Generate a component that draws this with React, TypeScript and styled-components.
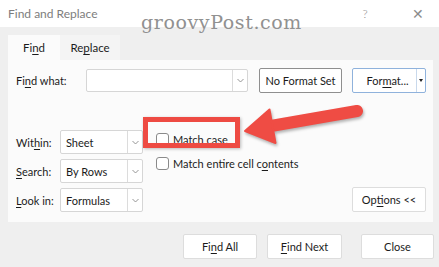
import React from "react";
import styled, { createGlobalStyle } from "styled-components";

const Global = createGlobalStyle`
  html, body {
    margin: 0;
    padding: 0;
    background: #f0f0f0;
  }
  body {
    font-family: "Lato", "Noto Sans", sans-serif;
    font-size: 11px;
    color: #1b1b1b;
    white-space: nowrap;
  }
`;

const Dialog = styled.div`
  position: relative;
  width: 439px;
  height: 267px;
  overflow: hidden;
  background: #efefef;
  display: flex;
  flex-direction: column;
`;

const TitleBar = styled.div`
  height: 27px;
  background: #ffffff;
  display: flex;
  align-items: center;
  padding-left: 8px;
  color: #7d7d7d;
  font-size: 12px;
`;

const Title = styled.span`
  flex: 1;
`;

const TitleControl = styled.span<{ $w: number }>`
  width: ${(p) => p.$w}px;
  text-align: center;
  color: #8c8c8c;
  font-size: ${(p) => (p.$w > 40 ? 14 : 12)}px;
  font-weight: 300;
`;

const Watermark = styled.div`
  position: absolute;
  left: 141px;
  top: 11px;
  font-family: "DejaVu Serif", "Liberation Serif", serif;
  font-size: 19px;
  color: #919191;
  letter-spacing: 0.6px;
`;

const Body = styled.div`
  flex: 1;
  display: flex;
  flex-direction: column;
  padding: 8px 6px 0 8px;
`;

const Tabs = styled.div`
  display: flex;
  height: 25px;
`;

const Tab = styled.div<{ $active?: boolean; $w: number }>`
  width: ${(p) => p.$w}px;
  display: flex;
  align-items: center;
  justify-content: center;
  background: ${(p) => (p.$active ? "#fbfbfb" : "#f4f4f4")};
  font-size: 11.5px;
`;

const Panel = styled.div`
  height: 162px;
  background: #fbfbfb;
  padding: 8px 7px 0 8px;
  box-sizing: border-box;
  display: flex;
  flex-direction: column;
`;

const FindRow = styled.div`
  display: flex;
  align-items: center;
  height: 25px;
`;

const Label = styled.span<{ $w: number }>`
  width: ${(p) => p.$w}px;
  flex: none;
`;

const Combo = styled.div<{ $w: number; $h: number }>`
  width: ${(p) => p.$w}px;
  height: ${(p) => p.$h}px;
  box-sizing: border-box;
  display: flex;
  background: #ffffff;
  border: 1px solid #d6d6d6;
  border-radius: 2px;
`;

const ComboText = styled.span`
  flex: 1;
  display: flex;
  align-items: center;
  padding-left: 5px;
`;

const ComboArrow = styled.span`
  width: 14px;
  border-left: 1px solid #dcdcdc;
  display: flex;
  align-items: center;
  justify-content: center;
`;

const Button = styled.div<{ $w: number; $tone?: "dark" | "blue" | "light" }>`
  width: ${(p) => p.$w}px;
  height: 25px;
  box-sizing: border-box;
  display: flex;
  align-items: center;
  justify-content: center;
  background: #ffffff;
  border-radius: 2px;
  border: 1px solid
    ${(p) =>
      p.$tone === "dark" ? "#8f8f8f" : p.$tone === "blue" ? "#8fb2dc" : "#dddddd"};
  flex: none;
`;

const SplitMain = styled.span`
  flex: 1;
  display: flex;
  align-items: center;
  justify-content: center;
  padding-left: 6px;
`;

const SplitArrow = styled.span`
  width: 8px;
  align-self: stretch;
  border-left: 1px solid #c9d9ec;
  display: flex;
  align-items: center;
  justify-content: center;
`;

const Lower = styled.div`
  display: flex;
  margin-top: 34px;
`;

const SelectCol = styled.div`
  display: flex;
  flex-direction: column;
  gap: 5px;
  padding-top: 3px;
`;

const SelectRow = styled.div`
  display: flex;
  align-items: center;
`;

const CheckCol = styled.div`
  display: flex;
  flex-direction: column;
  margin-left: 13px;
`;

const CheckRow = styled.div`
  display: flex;
  align-items: center;
  height: 24px;
  gap: 4px;
`;

const Box = styled.span`
  width: 13px;
  height: 13px;
  box-sizing: border-box;
  border: 1px solid #8a8a8a;
  border-radius: 3px;
  background: #ffffff;
`;

const OptionsSlot = styled.div`
  margin-left: auto;
  align-self: flex-end;
`;

const Footer = styled.div`
  display: flex;
  justify-content: flex-end;
  margin-top: 12px;
  margin-right: -1px;
`;

const Gap = styled.span<{ $w: number }>`
  width: ${(p) => p.$w}px;
`;

const U = styled.u`
  text-underline-offset: 2px;
`;

const Highlight = styled.div`
  position: absolute;
  left: 143px;
  top: 117px;
  width: 97px;
  height: 31px;
  box-sizing: border-box;
  border: 5px solid #ee4b43;
  box-shadow: 1px 1px 3px rgba(0, 0, 0, 0.25);
`;

const ArrowSvg = styled.svg`
  position: absolute;
  left: 0;
  top: 0;
  filter: drop-shadow(1px 2px 1.5px rgba(0, 0, 0, 0.3));
`;

const Chevron = () => (
  <svg width="7" height="5" viewBox="0 0 7 5">
    <polyline points="0.5,1 3.5,4 6.5,1" fill="none" stroke="#8a8a8a" strokeWidth="0.9" />
  </svg>
);

const Select = ({ value, w = 83 }: { value: string; w?: number }) => (
  <Combo $w={w} $h={24}>
    <ComboText>{value}</ComboText>
    <ComboArrow>
      <Chevron />
    </ComboArrow>
  </Combo>
);

export default function App() {
  return (
    <>
      <Global />
      <Dialog>
        <TitleBar>
          <Title>Find and Replace</Title>
          <TitleControl $w={26}>?</TitleControl>
          <Gap $w={19} />
          <TitleControl $w={42}>✕</TitleControl>
        </TitleBar>
        <Body>
          <Tabs>
            <Tab $active $w={52}>
              <span>
                Fi<U>n</U>d
              </span>
            </Tab>
            <Tab $w={60}>
              <span>
                Re<U>p</U>lace
              </span>
            </Tab>
          </Tabs>
          <Panel>
            <FindRow>
              <Label $w={70}>
                Fi<U>n</U>d what:
              </Label>
              <Combo $w={162} $h={23}>
                <ComboText />
                <ComboArrow>
                  <Chevron />
                </ComboArrow>
              </Combo>
              <Gap $w={11} />
              <Button $w={83} $tone="dark">
                No Format Set
              </Button>
              <Gap $w={10} />
              <Button $w={74} $tone="blue">
                <SplitMain>
                  <span>
                    For<U>m</U>at...
                  </span>
                </SplitMain>
                <SplitArrow>
                  <svg width="4" height="3" viewBox="0 0 4 3">
                    <polygon points="0,0 4,0 2,3" fill="#222" />
                  </svg>
                </SplitArrow>
              </Button>
            </FindRow>
            <Lower>
              <SelectCol>
                <SelectRow>
                  <Label $w={44}>
                    Wit<U>h</U>in:
                  </Label>
                  <Select value="Sheet" />
                </SelectRow>
                <SelectRow>
                  <Label $w={44}>
                    <U>S</U>earch:
                  </Label>
                  <Select value="By Rows" />
                </SelectRow>
                <SelectRow>
                  <Label $w={44}>
                    <U>L</U>ook in:
                  </Label>
                  <Select value="Formulas" />
                </SelectRow>
              </SelectCol>
              <CheckCol>
                <CheckRow>
                  <Box />
                  <span>
                    Match <U>c</U>ase
                  </span>
                </CheckRow>
                <CheckRow>
                  <Box />
                  <span>
                    Match entire cell c<U>o</U>ntents
                  </span>
                </CheckRow>
              </CheckCol>
              <OptionsSlot>
                <Button $w={74}>
                  <span>
                    Op<U>t</U>ions &lt;&lt;
                  </span>
                </Button>
              </OptionsSlot>
            </Lower>
          </Panel>
          <Footer>
            <Button $w={74}>
              <span>
                Fi<U>n</U>d All
              </span>
            </Button>
            <Gap $w={10} />
            <Button $w={75}>
              <span>
                <U>F</U>ind Next
              </span>
            </Button>
            <Gap $w={19} />
            <Button $w={73}>Close</Button>
          </Footer>
        </Body>
        <Watermark>groovyPost.com</Watermark>
        <Highlight />
        <ArrowSvg width="439" height="267" viewBox="0 0 439 267">
          <line x1="357" y1="111" x2="268" y2="126.5" stroke="#ef4c44" strokeWidth="12" strokeLinecap="round" />
          <polygon points="245,131 269.5,109.5 275.5,143" fill="#ef4c44" strokeLinejoin="round" stroke="#ef4c44" strokeWidth="2" />
        </ArrowSvg>
      </Dialog>
    </>
  );
}
